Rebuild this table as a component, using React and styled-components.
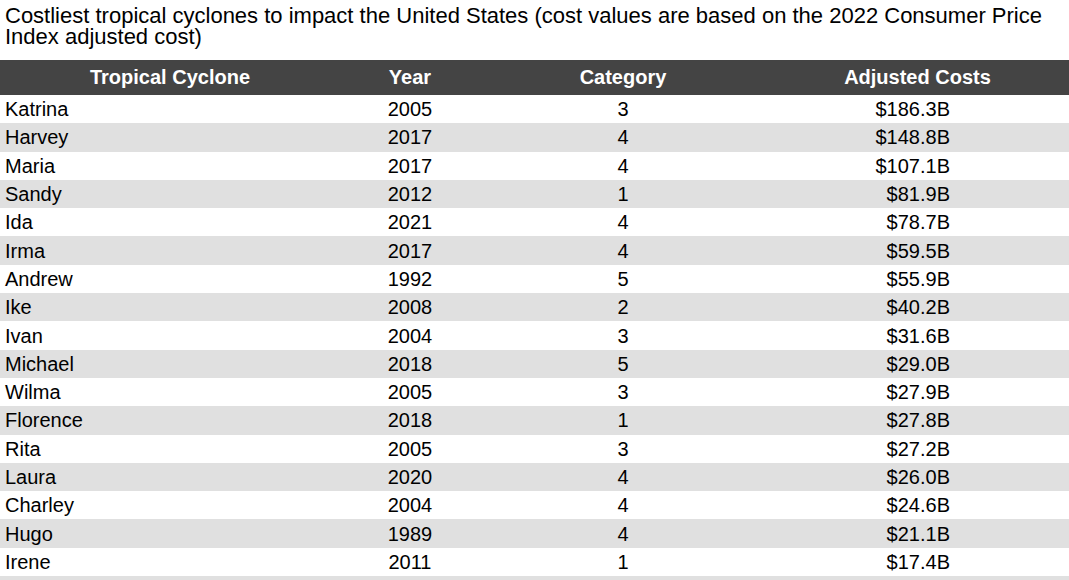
import styled, { createGlobalStyle } from 'styled-components';

const GlobalStyle = createGlobalStyle`
  html, body {
    margin: 0;
    padding: 0;
    background: #ffffff;
  }
  body {
    font-family: "Liberation Sans", Arial, sans-serif;
    color: #000000;
  }
`;

const Page = styled.div`
  width: 1069px;
  padding-top: 5px;
`;

const Caption = styled.h1`
  margin: 0 0 13px;
  padding: 0 5px;
  font-size: 22px;
  font-weight: 400;
  line-height: 21px;
`;

const Table = styled.table`
  width: 100%;
  border-collapse: collapse;
  table-layout: fixed;
  font-size: 20px;
`;

const HeadCell = styled.th`
  height: 35px;
  padding: 0;
  background: #444444;
  color: #ffffff;
  font-weight: 700;
  text-align: center;
  vertical-align: middle;
  width: ${(p) => p.$w || 'auto'};
`;

const Row = styled.tr`
  height: 28.3px;
  background: ${(p) => (p.$shade ? '#e0e0e0' : '#ffffff')};
`;

const Cell = styled.td`
  padding: 0 ${(p) => (p.$align === 'right' ? '119px' : '0')} 0
    ${(p) => (p.$align === 'left' ? '5px' : '0')};
  text-align: ${(p) => p.$align || 'center'};
  vertical-align: middle;
  line-height: 22px;
  white-space: nowrap;
`;

const storms = [
  ['Katrina', 2005, 3, '$186.3B'],
  ['Harvey', 2017, 4, '$148.8B'],
  ['Maria', 2017, 4, '$107.1B'],
  ['Sandy', 2012, 1, '$81.9B'],
  ['Ida', 2021, 4, '$78.7B'],
  ['Irma', 2017, 4, '$59.5B'],
  ['Andrew', 1992, 5, '$55.9B'],
  ['Ike', 2008, 2, '$40.2B'],
  ['Ivan', 2004, 3, '$31.6B'],
  ['Michael', 2018, 5, '$29.0B'],
  ['Wilma', 2005, 3, '$27.9B'],
  ['Florence', 2018, 1, '$27.8B'],
  ['Rita', 2005, 3, '$27.2B'],
  ['Laura', 2020, 4, '$26.0B'],
  ['Charley', 2004, 4, '$24.6B'],
  ['Hugo', 1989, 4, '$21.1B'],
  ['Irene', 2011, 1, '$17.4B'],
  ['Allison', 2001, 'TS', '$14.5B'],
];

export default function App() {
  return (
    <Page>
      <GlobalStyle />
      <Caption>
        Costliest tropical cyclones to impact the United States (cost values are based on the 2022 Consumer Price
        Index adjusted cost)
      </Caption>
      <Table>
        <thead>
          <tr>
            <HeadCell $w="340px">Tropical Cyclone</HeadCell>
            <HeadCell $w="140px">Year</HeadCell>
            <HeadCell $w="286px">Category</HeadCell>
            <HeadCell>Adjusted Costs</HeadCell>
          </tr>
        </thead>
        <tbody>
          {storms.map(([name, year, cat, cost], i) => (
            <Row key={name} $shade={i % 2 === 1}>
              <Cell $align="left">{name}</Cell>
              <Cell>{year}</Cell>
              <Cell>{cat}</Cell>
              <Cell $align="right">{cost}</Cell>
            </Row>
          ))}
        </tbody>
      </Table>
    </Page>
  );
}
